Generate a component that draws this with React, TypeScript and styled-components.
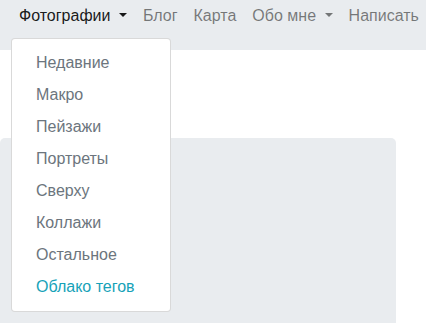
import React from "react";
import styled, { createGlobalStyle } from "styled-components";

const Global = createGlobalStyle`
  html, body { margin: 0; padding: 0; background: #fff; overflow: hidden; }
  body { font-family: "Liberation Sans", Arial, sans-serif; font-size: 16px; line-height: 24px; }
`;

const Page = styled.div`
  width: 426px;
  height: 323px;
  overflow: hidden;
`;

const Navbar = styled.nav`
  background: #e9ecef;
  display: flex;
  align-items: flex-start;
  padding: 0 0 14px 11px;
`;

const NavList = styled.ul`
  display: flex;
  list-style: none;
  margin: 0;
  padding: 0;
`;

const NavItem = styled.li`
  position: relative;
`;

const NavLink = styled.a<{ $active?: boolean }>`
  display: block;
  padding: 4px 8px 8px;
  color: ${(p) => (p.$active ? "rgba(0,0,0,.9)" : "rgba(0,0,0,.5)")};
  text-decoration: none;
  white-space: nowrap;
`;

const Caret = styled.span`
  display: inline-block;
  margin-left: 0.255em;
  vertical-align: 0.255em;
  border-top: 0.3em solid;
  border-right: 0.3em solid transparent;
  border-left: 0.3em solid transparent;
  border-bottom: 0;
`;

const Menu = styled.div`
  position: absolute;
  top: 100%;
  left: 0;
  margin-top: 2px;
  min-width: 158px;
  padding: 8px 0;
  background: #fff;
  border: 1px solid rgba(0, 0, 0, 0.15);
  border-radius: 4px;
  z-index: 10;
`;

const MenuItem = styled.a<{ $accent?: boolean }>`
  display: block;
  padding: 4px 24px;
  color: ${(p) => (p.$accent ? "#17a2b8" : "#6c757d")};
  text-decoration: none;
  white-space: nowrap;
`;

const Jumbotron = styled.div`
  margin: 88px 30px 0 0;
  height: 300px;
  background: #e9ecef;
  border-radius: 5px;
`;

const items = ["Недавние", "Макро", "Пейзажи", "Портреты", "Сверху", "Коллажи", "Остальное"];

export default function App() {
  return (
    <Page>
      <Global />
      <Navbar>
        <NavList>
          <NavItem>
            <NavLink $active href="#">
              Фотографии{" "}<Caret />
            </NavLink>
            <Menu>
              {items.map((t) => (
                <MenuItem key={t} href="#">{t}</MenuItem>
              ))}
              <MenuItem $accent href="#">Облако тегов</MenuItem>
            </Menu>
          </NavItem>
          <NavItem><NavLink href="#">Блог</NavLink></NavItem>
          <NavItem><NavLink href="#">Карта</NavLink></NavItem>
          <NavItem><NavLink href="#">Обо мне{" "}<Caret /></NavLink></NavItem>
          <NavItem><NavLink href="#">Написать</NavLink></NavItem>
        </NavList>
      </Navbar>
      <Jumbotron />
    </Page>
  );
}
